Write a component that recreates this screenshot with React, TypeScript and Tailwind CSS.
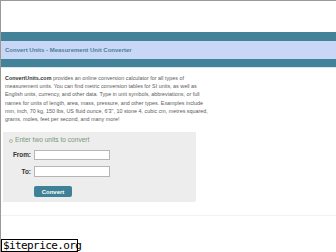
export default function App() {
  return (
    <div className="relative w-[336px] h-[252px] overflow-hidden bg-white border-t border-l border-[#9a9a9a] font-['Liberation_Sans',Arial,sans-serif]">
      {/* spacer above header band */}
      <div className="h-[31px]" />

      {/* header band */}
      <div className="h-[9px] bg-[#43839a]" />
      <div className="h-[18px] bg-[#c8d7f6] flex items-center pl-[4px]">
        <h1 className="text-[6px] font-bold text-[#4b7f9b] leading-none">Convert Units - Measurement Unit Converter</h1>
      </div>
      <div className="h-[8px] bg-[#43839a]" />
      <div className="h-[1px] bg-[#dfe6f0]" />

      {/* intro text */}
      <p className="mt-[6px] pl-[4px] text-[5.4px] leading-[8.2px] text-[#5c5c5c] whitespace-nowrap">
        <b className="text-[#333]">ConvertUnits.com</b> provides an online conversion calculator for all types of<br />
        measurement units. You can find metric conversion tables for SI units, as well as<br />
        English units, currency, and other data. Type in unit symbols, abbreviations, or full<br />
        names for units of length, area, mass, pressure, and other types. Examples include<br />
        mm, inch, 70 kg, 150 lbs, US fluid ounce, 6'3", 10 stone 4, cubic cm, metres squared,<br />
        grams, moles, feet per second, and many more!
      </p>

      {/* converter box */}
      <div className="mt-[9px] ml-[2px] w-[193px] h-[70px] bg-[#ededee] rounded-br-[2px] pt-[5px]">
        <div className="flex items-center gap-[2px] pl-[6px] text-[6.6px] text-[#7a987a] leading-none">
          <span className="inline-block w-[4px] h-[4px] rounded-full border border-[#a9bfa9]" />
          <span>Enter two units to convert</span>
        </div>
        <div className="mt-[6px] grid grid-cols-[31px_76px] items-center gap-y-[6px] text-[6.4px] font-bold text-[#333]">
          <label className="text-right pr-[3px]">From:</label>
          <input className="h-[10px] w-[76px] bg-white border border-[#b5b5b5]" />
          <label className="text-right pr-[3px]">To:</label>
          <input className="h-[11px] w-[76px] bg-white border border-[#b5b5b5]" />
        </div>
        <button className="ml-[31px] mt-[4px] w-[38px] h-[11px] rounded-[2px] bg-[#3f8197] text-white text-[6px] font-bold leading-none">
          Convert
        </button>
      </div>

      {/* faint divider */}
      <div className="mt-[13px] h-[1px] bg-[#f2f2f2]" />

      {/* watermark */}
      <div className="absolute left-0 bottom-0 w-[77px] h-[13px] border border-black bg-white text-black text-[11px] leading-[11px] font-['DejaVu_Sans_Mono',monospace] tracking-[-0.6px] pl-[1px]">
        $iteprice.org
      </div>
    </div>
  )
}
